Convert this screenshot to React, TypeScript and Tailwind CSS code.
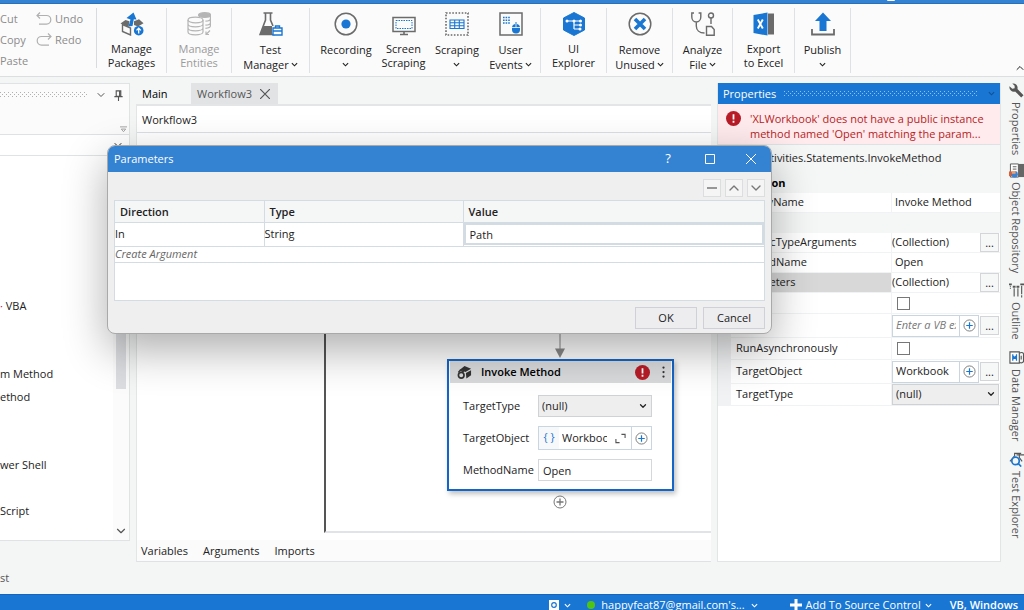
import React from "react";
import { ChevronDown, ChevronUp } from "lucide-react";

const GREY = "#6b6b6b";
const BLUE = "#1976d2";

function Down({ className = "" }: { className?: string }) {
  return (
    <svg viewBox="0 0 8 8" className={`inline-block size-[7px] shrink-0 ${className}`} fill="none" stroke="currentColor" strokeWidth="1.3">
      <path d="M1 2.5 4 5.5 7 2.5" />
    </svg>
  );
}

function PackagesIcon() {
  return (
    <svg viewBox="0 0 24 24" className="size-6" fill="none">
      <path d="M2.500 12.500v7l8 3.500v-7Z" stroke={GREY} strokeWidth="1.400" />
      <path d="M0.500 11.500 5.500 8l4 1.200L8.500 15Z" fill={GREY} />
      <path d="M14 9.200l5-2 4.500 4-5.500 3.300-4-1.500Z" fill={GREY} />
      <path d="M8.500 14.500 10.500 7.500 6.500 6 13.500 0.500 16.500 7.500 13.800 7.200 12.500 14Z" fill={BLUE} />
      <circle cx="18.700" cy="18.700" r="4.800" fill={BLUE} />
      <path d="M18.700 21.500v-5M16.500 18.400l2.200-2.200 2.200 2.200" stroke="#fff" strokeWidth="1.300" />
    </svg>
  );
}

function EntitiesIcon() {
  return (
    <svg viewBox="0 0 24 24" className="size-6" fill="none" stroke="#b5b5b5" strokeWidth="1.200">
      <ellipse cx="17.500" cy="3" rx="6" ry="2.300" fill="#b5b5b5" />
      <path d="M23.400 3v11c0 1.200-2 2-5 2.300M23.400 7c0 1-2 2-5 2.200M23.400 11c0 1-2 2-5 2.200" />
      <ellipse cx="8.500" cy="8" rx="7.500" ry="2.800" />
      <path d="M1 8v12c0 1.600 3.400 2.800 7.500 2.800S16 21.600 16 20V8M1 12c0 1.600 3.400 2.800 7.500 2.800S16 13.600 16 12M1 16c0 1.600 3.400 2.800 7.500 2.800S16 17.600 16 16" />
      <path d="M23 18.500 19 22.500M19 19.500v3h3" />
    </svg>
  );
}

function FlaskIcon() {
  return (
    <svg viewBox="0 0 24 24" className="size-6" fill="none">
      <path d="M4.500 1h9M6.500 1v7L1 22.500h15M11.500 1v7l2.500 6" stroke={GREY} strokeWidth="1.600" />
      <path d="M4.500 14h8.500v9H1Z" fill={GREY} />
      <path d="M14 16h9v7h-9ZM16.500 16v-2h4v2M14 19h9" stroke={BLUE} strokeWidth="1.400" fill="#fff" />
    </svg>
  );
}

function RecordingIcon() {
  return (
    <svg viewBox="0 0 24 24" className="size-6" fill="none">
      <circle cx="12" cy="12" r="10.800" stroke={GREY} strokeWidth="1.500" />
      <circle cx="12" cy="12" r="4.600" fill={BLUE} />
    </svg>
  );
}

function ScreenIcon() {
  return (
    <svg viewBox="0 0 24 24" className="size-6" fill="none">
      <rect x="1" y="5.500" width="22" height="14" stroke={GREY} strokeWidth="1.500" />
      <rect x="4" y="8.500" width="16" height="8" stroke={BLUE} strokeDasharray="1.500 1" />
      <path d="M12 19v3M8 22.500h8" stroke={GREY} strokeWidth="1.600" />
    </svg>
  );
}

function ScrapingIcon() {
  return (
    <svg viewBox="0 0 24 24" className="size-6" fill="none">
      <rect x="1" y="1" width="22" height="22" stroke={GREY} strokeWidth="1.600" strokeDasharray="1.600 1.540" />
      <path d="M5 8h14v8.500H5ZM5 10.800h14M5 13.700h14M9.700 8v8.500M14.300 8v8.500" stroke={BLUE} strokeWidth="1.100" />
    </svg>
  );
}

function EventsIcon() {
  return (
    <svg viewBox="0 0 24 24" className="size-6" fill="none">
      <rect x="1" y="1" width="22" height="22" stroke={GREY} strokeWidth="1.500" />
      <path d="M4 5.500h7M4 8.200h7M4 11h7" stroke={BLUE} strokeWidth="1.600" strokeDasharray="1.600 1" />
      <path d="M17 10v2" stroke={BLUE} />
      <rect x="13" y="12" width="8" height="9.500" rx="4" fill={BLUE} />
      <path d="M13 15.500h8M17 12v3.500" stroke="#fff" strokeWidth="0.800" />
    </svg>
  );
}

function ExplorerIcon() {
  return (
    <svg viewBox="0 0 24 24" className="size-6" fill="none">
      <path d="M12 0.500 22.500 6v12L12 23.500 1.500 18V6Z" fill={BLUE} stroke={BLUE} strokeLinejoin="round" />
      <path d="M5 9h14M12 9v8M12 13h7M12 17h6" stroke="#fff" strokeWidth="1.200" />
      <g fill="#fff">
        <circle cx="5" cy="9" r="1.500" />
        <circle cx="12" cy="9" r="1.500" />
        <circle cx="18.500" cy="9" r="1.500" />
        <circle cx="18.500" cy="13" r="1.500" />
        <circle cx="18" cy="17" r="1.500" />
      </g>
    </svg>
  );
}

function RemoveIcon() {
  return (
    <svg viewBox="0 0 24 24" className="size-6" fill="none">
      <circle cx="12" cy="12" r="10.800" stroke={GREY} strokeWidth="1.500" />
      <path d="M7 7l10 10M17 7 7 17" stroke={BLUE} strokeWidth="3.600" />
    </svg>
  );
}

function AnalyzeIcon() {
  return (
    <svg viewBox="0 0 24 24" className="size-6" fill="none" stroke={GREY} strokeWidth="1.400">
      <path d="M3 1H0.800v4c0 3 2 5 4.500 5s4.500-2 4.500-5V1H7.600M5.300 10v4c0 4 3 7 8.200 7" />
      <circle cx="20" cy="3.500" r="2.500" />
      <path d="M20 6v6M15.500 14.500h5l2.700 3v5.800h-7.700Z" />
    </svg>
  );
}

function ExcelIcon() {
  return (
    <svg viewBox="0 0 24 24" className="size-6" fill="none">
      <path d="M16 1.500h6v21h-6Z" fill={GREY} />
      <path d="M1.500 3 15.500 0.500v23L1.500 21Z" fill={BLUE} />
      <path d="M5.800 7.500l5 9M10.800 7.500l-5 9" stroke="#fff" strokeWidth="1.900" />
    </svg>
  );
}

function PublishIcon() {
  return (
    <svg viewBox="0 0 24 24" className="size-6" fill="none">
      <path d="M1 17v5.500h22V17" stroke={GREY} strokeWidth="1.800" />
      <path d="M12 0.500 20 9h-4.500v10h-7V9H4Z" fill={BLUE} />
    </svg>
  );
}

type RibbonItemProps = {
  icon: React.ReactNode;
  first: string;
  second?: string;
  menu?: boolean;
  disabled?: boolean;
  className: string;
};

function RibbonItem({ icon, first, second, menu, disabled, className }: RibbonItemProps) {
  return (
    <button
      disabled={disabled}
      className={`flex shrink-0 flex-col items-center gap-[6px] whitespace-nowrap pt-1 ${disabled ? "text-[#9a9a9a]" : "text-[#222]"} ${className}`}
    >
      {icon}
      <span className={`flex flex-col items-center ${menu ? "leading-[15px]" : "leading-[14px]"}`}>
        <span>{first}</span>
        <span className="flex min-h-[14px] items-center gap-[2px]">
          {second}
          {menu && <Down />}
        </span>
      </span>
    </button>
  );
}

function Ribbon() {
  return (
    <header className="flex h-[73px] shrink-0 items-start overflow-hidden border-b border-[#dcdfe0] bg-[#fbfbfb] pt-1">
      <div className="flex h-[60px] w-[97px] shrink-0 border-r border-[#d9dcde] text-[#8b8b8b]">
        <div className="flex w-9 flex-col items-start leading-[21px]">
          <button>Cut</button>
          <button>Copy</button>
          <button>Paste</button>
        </div>
        <div className="flex flex-col items-start leading-[21px]">
          <button className="flex items-center gap-[3px]">
            <svg viewBox="0 0 16 16" className="size-4" fill="none" stroke="#b0b0b0" strokeWidth="1.200">
              <path d="M4 1.500 1 4.500l3 3M1 4.500h9.500a4.300 4.300 0 0 1 0 8.600H3" />
            </svg>
            Undo
          </button>
          <button className="flex items-center gap-[3px]">
            <svg viewBox="0 0 16 16" className="size-4" fill="none" stroke="#b0b0b0" strokeWidth="1.200">
              <path d="M12 1.500l3 3-3 3M15 4.500H5.500a4.300 4.300 0 0 0 0 8.600H13" />
            </svg>
            Redo
          </button>
        </div>
      </div>
      <div className="flex h-[65px] shrink-0">
        <div className="flex border-r border-[#dfe2e4]">
          <RibbonItem icon={<PackagesIcon />} first="Manage" second="Packages" className="w-[69px]" />
        </div>
        <div className="flex border-r border-[#dfe2e4]">
          <RibbonItem icon={<EntitiesIcon />} first="Manage" second="Entities" disabled className="w-16" />
        </div>
        <div className="flex border-r border-[#dfe2e4]">
          <RibbonItem icon={<FlaskIcon />} first="Test" second="Manager" menu className="w-[77px]" />
        </div>
        <div className="flex border-r border-[#dfe2e4] px-1">
          <RibbonItem icon={<RecordingIcon />} first="Recording" menu className="w-16" />
          <RibbonItem icon={<ScreenIcon />} first="Screen" second="Scraping" className="w-[51px]" />
          <RibbonItem icon={<ScrapingIcon />} first="Scraping" menu className="w-14" />
          <RibbonItem icon={<EventsIcon />} first="User" second="Events" menu className="w-[51px]" />
        </div>
        <div className="flex border-r border-[#dfe2e4]">
          <RibbonItem icon={<ExplorerIcon />} first="UI" second="Explorer" className="w-[65px]" />
        </div>
        <div className="flex border-r border-[#dfe2e4]">
          <RibbonItem icon={<RemoveIcon />} first="Remove" second="Unused" menu className="w-[65px]" />
        </div>
        <div className="flex border-r border-[#dfe2e4]">
          <RibbonItem icon={<AnalyzeIcon />} first="Analyze" second="File" menu className="w-[59px]" />
        </div>
        <div className="flex border-r border-[#dfe2e4]">
          <RibbonItem icon={<ExcelIcon />} first="Export" second="to Excel" className="w-[61px]" />
        </div>
        <div className="flex border-r border-[#dfe2e4]">
          <RibbonItem icon={<PublishIcon />} first="Publish" menu className="w-[55px]" />
        </div>
      </div>
      <button aria-label="Collapse ribbon" className="ml-auto self-end pb-[2px]">
        <ChevronUp className="-mr-[2px] size-3" />
      </button>
    </header>
  );
}

function Dots({ color, className }: { color: string; className: string }) {
  return (
    <svg className={className} aria-hidden="true">
      <defs>
        <pattern id={`grip${color.slice(1)}`} width="4" height="4" patternUnits="userSpaceOnUse">
          <rect width="1" height="1" fill={color} />
          <rect x="2" y="2" width="1" height="1" fill={color} />
        </pattern>
      </defs>
      <rect width="100%" height="100%" fill={`url(#grip${color.slice(1)})`} />
    </svg>
  );
}

function ActivitiesPanel() {
  return (
    <aside className="mb-[53px] flex w-[130px] shrink-0 flex-col border border-l-0 border-[#e0e3e4] bg-white">
      <div className="flex h-[51px] shrink-0 flex-col justify-between border-b border-[#dfe2e4] bg-[#fbfbfb]">
        <div className="flex h-[22px] items-center">
          <Dots color="#b0b0b0" className="h-[6px] w-[88px]" />
          <ChevronDown className="ml-[7px] size-3 text-[#555]" />
          <svg viewBox="0 0 12 12" className="ml-[6px] size-[11px]" fill="none" stroke="#555" strokeWidth="1.200">
            <path d="M3.500 1h5v6h-5ZM7.200 1v6M1.500 7.200h9M6 7v5" />
          </svg>
        </div>
        <svg viewBox="0 0 8 8" className="mr-[2px] mb-px size-[7px] self-end" fill="none" stroke="#999">
          <path d="M0 1h8M1.500 3.500h5L4 6.500Z" />
        </svg>
      </div>
      <div className="flex h-[21px] shrink-0 items-start justify-end border-b border-[#e0e3e4] pt-1 pr-[5px]">
        <ChevronDown className="size-3" />
      </div>
      <div className="flex flex-1">
        <ul className="flex-1 overflow-hidden whitespace-nowrap pt-[138px] leading-[23px] text-[#222]">
          <li><span className="text-[#c2185b]">·</span> VBA</li>
          <li className="mt-[45px]">m Method</li>
          <li>ethod</li>
          <li className="mt-[45px]">wer Shell</li>
          <li className="mt-[23px]">Script</li>
        </ul>
        <div className="flex w-4 flex-col items-center justify-between bg-[#fbfbfb]">
          <div className="h-[233px] w-[10px] bg-[#dcdde0]" />
          <ChevronDown className="mb-[2px] size-[14px] text-[#555]" />
        </div>
      </div>
    </aside>
  );
}

function PlusCircle({ className, ring = "#777", plus = BLUE }: { className: string; ring?: string; plus?: string }) {
  return (
    <svg viewBox="0 0 14 14" className={className} fill="none">
      <circle cx="7" cy="7" r="6" stroke={ring} />
      <path d="M7 3.500v7M3.500 7h7" stroke={plus} strokeWidth="1.300" />
    </svg>
  );
}

function ErrorIcon({ className }: { className: string }) {
  return (
    <svg viewBox="0 0 16 16" className={className}>
      <circle cx="8" cy="8" r="8" fill="#b71c27" />
      <path d="M8 3.500v5.500M8 10.500v2" stroke="#fff" strokeWidth="1.900" />
    </svg>
  );
}

function InvokeNode() {
  return (
    <section className="absolute top-[226px] left-[310px] h-[132px] w-[227px] border-2 border-[#1565c8] bg-white text-[#222] shadow-[2px_3px_5px_rgba(0,0,0,0.25)]">
      <div className="mx-px flex h-[22px] items-center bg-[#d9dadc] pl-[7px] font-semibold text-black">
        <svg viewBox="0 0 16 16" className="mr-[9px] size-[15px]" fill="none">
          <path d="M8 1 15 4 9 7.500 3 5ZM9.500 8.500 15 5.500v5.500l-5 3.500Z" fill="#333" />
          <circle cx="4.500" cy="11" r="3" stroke="#333" strokeWidth="1.800" />
          <path d="M1.500 8 3.500 5.500l4 2" stroke="#333" strokeWidth="1.500" />
        </svg>
        <h2>Invoke Method</h2>
        <ErrorIcon className="ml-auto size-[15px]" />
        <button aria-label="More options" className="ml-3 mr-[6px]">
          <svg viewBox="0 0 4 16" className="h-4 w-[3px]" fill="#333">
            <circle cx="2" cy="2" r="1.500" />
            <circle cx="2" cy="8" r="1.500" />
            <circle cx="2" cy="14" r="1.500" />
          </svg>
        </button>
      </div>
      <div className="grid grid-cols-[75px_114px] items-center gap-y-[9px] pt-3 pl-[14px]">
        <label htmlFor="nodeType">TargetType</label>
        <div className="relative">
          <select id="nodeType" className="h-[22px] w-full appearance-none border border-[#d0d3d6] bg-[#eeeeef] pl-[3px] align-top">
            <option>(null)</option>
          </select>
          <ChevronDown className="pointer-events-none absolute top-[6px] right-1 size-[10px]" strokeWidth={3} />
        </div>
        <label htmlFor="nodeObject">TargetObject</label>
        <div className="flex h-6 items-center border border-[#c9d5e0]">
          <span className="h-full w-5 bg-[#f7f8f9] text-center leading-[20px] text-[#1976d2]">{"{ }"}</span>
          <input id="nodeObject" defaultValue="Workbook" className="ml-[3px] w-[45px]" />
          <button aria-label="Expand" className="ml-2">
            <svg viewBox="0 0 12 12" className="size-[11px]" fill="none" stroke="#555" strokeWidth="1.200">
              <path d="M7 1.500h4v4M1 6.500v4h4" />
            </svg>
          </button>
          <button aria-label="Add" className="ml-auto flex h-full w-5 items-center justify-center border-l border-[#c9d5e0]">
            <PlusCircle className="size-[13px]" />
          </button>
        </div>
        <label htmlFor="nodeMethod">MethodName</label>
        <input id="nodeMethod" defaultValue="Open" className="h-[22px] w-full border border-[#d5d8db] px-1" />
      </div>
    </section>
  );
}

function Designer() {
  return (
    <main className="mb-8 flex min-w-0 flex-1 flex-col">
      <nav className="flex h-[21px] shrink-0">
        <button className="w-[55px] pt-[2px] pl-[6px] text-left text-black">Main</button>
        <div className="flex items-center bg-[#e1e3e5] pt-[2px] pl-[6px] text-[#555]">
          <button>Workflow3</button>
          <button aria-label="Close Workflow3" className="mx-2 pb-px">
            <svg viewBox="0 0 10 10" className="size-[10px]" stroke="#555" strokeWidth="1.200">
              <path d="M0 0l10 10M10 0 0 10" />
            </svg>
          </button>
        </div>
      </nav>
      <div className="flex min-h-0 flex-1 flex-col border-t-2 border-b border-l border-t-[#e3e5e7] border-b-[#dfe2e4] border-l-[#e3e5e7] bg-white">
        <div className="h-[27px] shrink-0 border-b border-[#dae0e5] pl-[5px] leading-[28px]">Workflow3</div>
        <div className="relative flex-1 overflow-hidden">
          <div className="absolute top-5 right-0 bottom-[7px] left-[187px] border-b-2 border-l-2 border-b-[#e0e4e9] border-l-[#555]" />
          <svg viewBox="0 0 10 30" className="absolute top-[195px] left-[418px] h-[30px] w-[10px]">
            <path d="M5 0v24" stroke="#888" />
            <path d="M0 20.500h10L5 30Z" fill="#888" />
          </svg>
          <InvokeNode />
          <button aria-label="Add activity" className="absolute top-[362px] left-[416px]">
            <PlusCircle className="size-[14px]" plus="#777" />
          </button>
        </div>
        <div className="flex h-[21px] shrink-0 items-center gap-[15px] bg-[#fbfbfb] pt-[2px] pl-1">
          <button>Variables</button>
          <button>Arguments</button>
          <button>Imports</button>
        </div>
      </div>
    </main>
  );
}

function PropRow({ id, label, height, selected, children }: { id?: string; label: string; height: string; selected?: boolean; children?: React.ReactNode }) {
  return (
    <div className={`grid grid-cols-[13px_1fr_108px] border-b border-[#f1f2f3] ${height}`}>
      <span className="bg-[#f1f2f3]" />
      <label htmlFor={id} className={`flex items-center border-r border-[#f1f2f3] pl-[5px] ${selected ? "bg-[#d8d8d8]" : ""}`}>
        {label}
      </label>
      <div className="flex items-center pr-[1px]">{children}</div>
    </div>
  );
}

function More({ label }: { label: string }) {
  return (
    <button aria-label={label} className="ml-auto h-[19px] w-[19px] shrink-0 border border-[#d3d5d8] bg-[#f6f7f7] leading-[16px]">
      ...
    </button>
  );
}

function Expression({ id, value, placeholder }: { id: string; value?: string; placeholder?: string }) {
  return (
    <>
      <div className="flex h-[22px] w-[87px] border border-[#c9d5e0]">
        <input id={id} defaultValue={value} placeholder={placeholder} className="my-px ml-[3px] w-[60px] min-w-0 placeholder:text-[#777] placeholder:italic" />
        <button aria-label={`Add to ${id}`} className="ml-auto flex w-[19px] shrink-0 items-center justify-center border-l border-[#c9d5e0]">
          <PlusCircle className="size-[13px]" />
        </button>
      </div>
      <More label={`Edit ${id}`} />
    </>
  );
}

function PropertiesPanel() {
  return (
    <aside className="mr-[7px] mb-8 flex w-[284px] shrink-0 flex-col border border-t-0 border-[#e2e5e6] bg-white">
      <div className="flex h-[21px] shrink-0 items-center bg-[#1976d2] pl-[5px] text-white">
        <h2 className="pt-px">Properties</h2>
        <Dots color="#8cc0f0" className="ml-2 h-[6px] w-[194px] shrink-0" />
        <Down className="ml-[10px] text-[#0f5298]" />
      </div>
      <div className="flex h-[41px] shrink-0 border-b border-[#dfe2e4] bg-[#ffebee] pt-[7px] pl-[8px] leading-[15px] text-[#b71c1c]">
        <ErrorIcon className="size-[15px]" />
        <p className="ml-[9px] whitespace-nowrap">
          'XLWorkbook' does not have a public instance
          <br />
          method named 'Open' matching the param...
        </p>
      </div>
      <div className="h-7 shrink-0 bg-[#f5f6f6] leading-[26px]">System.Activities.Statements.InvokeMethod</div>
      <div className="h-5 shrink-0 bg-[#f5f6f6] pl-[18px] leading-5 font-bold text-black">Common</div>
      <PropRow id="DisplayName" label="DisplayName" height="h-5">
        <input id="DisplayName" defaultValue="Invoke Method" className="w-full pl-[3px]" />
      </PropRow>
      <div className="h-5 shrink-0 bg-[#f5f6f6] pl-[18px] leading-5 font-bold text-black">Misc</div>
      <PropRow label="GenericTypeArguments" height="h-5">
        (Collection)
        <More label="Edit type arguments" />
      </PropRow>
      <PropRow id="MethodName" label="MethodName" height="h-5">
        <input id="MethodName" defaultValue="Open" className="w-full pl-[3px]" />
      </PropRow>
      <PropRow label="Parameters" height="h-5" selected>
        (Collection)
        <More label="Edit parameters" />
      </PropRow>
      <PropRow id="Private" label="Private" height="h-[21px]">
        <input id="Private" type="checkbox" className="ml-[5px] size-[13px] appearance-none border border-[#777] bg-white" />
      </PropRow>
      <PropRow id="Result" label="Result" height="h-6">
        <Expression id="Result" placeholder="Enter a VB expression" />
      </PropRow>
      <PropRow id="RunAsynchronously" label="RunAsynchronously" height="h-[22px]">
        <input id="RunAsynchronously" type="checkbox" className="ml-[5px] size-[13px] appearance-none border border-[#777] bg-white" />
      </PropRow>
      <PropRow id="TargetObject" label="TargetObject" height="h-6">
        <Expression id="TargetObject" value="Workbook" />
      </PropRow>
      <PropRow id="TargetType" label="TargetType" height="h-[22px]">
        <div className="relative flex-1">
          <select id="TargetType" className="h-[21px] w-full appearance-none border border-[#cfd2d5] bg-[#eeeeef] pl-[3px] align-top">
            <option>(null)</option>
          </select>
          <ChevronDown className="pointer-events-none absolute top-[5px] right-[3px] size-[10px]" strokeWidth={3} />
        </div>
      </PropRow>
    </aside>
  );
}

function SideTab({ icon, label, className }: { icon: React.ReactNode; label: string; className: string }) {
  return (
    <button className={`flex shrink-0 flex-col items-center gap-1 text-[#555] ${className}`}>
      {icon}
      <span className="whitespace-nowrap leading-[14px] [writing-mode:vertical-rl]">{label}</span>
    </button>
  );
}

function SideTabs() {
  return (
    <nav className="flex w-4 shrink-0 flex-col items-center">
      <SideTab
        label="Properties"
        className="h-20"
        icon={
          <svg viewBox="0 0 16 16" className="size-[15px]">
            <path d="M3.500 0.500a4.800 4.800 0 0 1 5.500 6L15.500 13l-2.500 2.500L6.500 9A4.800 4.800 0 0 1 0.500 3.500L3.500 6l2.500-0.500V3Z" fill="#555" />
          </svg>
        }
      />
      <SideTab
        label="Object Repository"
        className="h-[120px]"
        icon={
          <svg viewBox="0 0 16 16" className="size-[15px]" fill="none">
            <path d="M1.500 1H10v14H1.500Z" stroke="#555" fill="#fff" />
            <path d="M10 1h6v14h-6Z" fill="#666" />
            <path d="M4 4h4M4 6.500h4" stroke="#555" />
            <path d="M0 9h4v5H0Z" fill="#e25c2c" />
            <circle cx="6" cy="12" r="3.500" fill="#3b82d0" />
            <path d="M3 8.500h4v3H3Z" fill="#f0a070" />
          </svg>
        }
      />
      <SideTab
        label="Outline"
        className="h-[67px]"
        icon={
          <svg viewBox="0 0 16 16" className="size-[15px]" fill="none" stroke="#555" strokeWidth="1.200">
            <path d="M5.500 5.500v10M9.500 5.500v10M13.500 3v12.500" strokeDasharray="9 1" />
            <path d="M0 1.500h3M12 1.500h4M4 4h3M8 4h3" strokeWidth="2" />
            <path d="M1.500 3v3" strokeDasharray="1 1" />
          </svg>
        }
      />
      <SideTab
        label="Data Manager"
        className="h-[102px]"
        icon={
          <svg viewBox="0 0 16 16" className="size-[15px]" fill="none">
            <path d="M1 2h10v12H1Z" stroke="#555" fill="#fff" strokeWidth="1.200" />
            <path d="M4 4.500v7M8 4.500v7M4 6l4 4M8 6l-4 4" stroke={BLUE} strokeWidth="1.300" />
            <path d="M11 3.500c3-2 5 0 4.500 2v5c.5 3-2 4-4.500 2.500M13 6v4" stroke="#555" strokeWidth="1.200" />
          </svg>
        }
      />
      <SideTab
        label="Test Explorer"
        className=""
        icon={
          <svg viewBox="0 0 16 16" className="size-[15px]" fill="none">
            <path d="M1 10 6 4V1.500h7M8 3h8M11 1v5l3 4" stroke="#555" strokeWidth="1.200" />
            <circle cx="7" cy="9.500" r="4" stroke={BLUE} strokeWidth="1.800" fill="#f4f6f6" />
            <path d="M10 12.500 13 15.500" stroke={BLUE} strokeWidth="1.800" />
          </svg>
        }
      />
    </nav>
  );
}

function ParametersDialog() {
  return (
    <div
      role="dialog"
      aria-label="Parameters"
      className="absolute top-[145px] left-[107px] w-[665px] overflow-hidden rounded-lg border border-[#a9a9a9] bg-[#efefef] text-[#222] shadow-[0_16px_44px_rgba(0,0,0,0.32)]"
    >
      <div className="flex h-[26px] items-center bg-[#3482d2] pl-[6px] text-white">
        <h1>Parameters</h1>
        <button aria-label="Help" className="ml-auto w-[42px] text-[13px]">?</button>
        <button aria-label="Maximize" className="flex w-[42px] justify-center">
          <svg viewBox="0 0 10 10" className="size-[10px]" fill="none" stroke="#fff"><path d="M.5.5h9v9h-9Z" /></svg>
        </button>
        <button aria-label="Close" className="flex w-10 justify-center">
          <svg viewBox="0 0 10 10" className="size-[10px]" fill="none" stroke="#fff"><path d="M0 0l10 10M10 0 0 10" /></svg>
        </button>
      </div>
      <div className="px-[6px] pt-[7px] pb-1">
        <div className="flex justify-end gap-1">
          <button aria-label="Remove" className="flex size-[18px] items-center justify-center border border-[#dcdddf] bg-[#f5f5f5]">
            <svg viewBox="0 0 10 10" className="size-[10px]" stroke="#777" strokeWidth="1.300"><path d="M0 5h10" /></svg>
          </button>
          <button aria-label="Move up" className="flex size-[18px] items-center justify-center border border-[#dcdddf] bg-[#f5f5f5]">
            <ChevronUp className="size-4 shrink-0 text-[#777]" />
          </button>
          <button aria-label="Move down" className="flex size-[18px] items-center justify-center border border-[#dcdddf] bg-[#f5f5f5]">
            <ChevronDown className="size-4 shrink-0 text-[#777]" />
          </button>
        </div>
        <div className="mt-[3px] h-[101px] border border-[#d3dce3] bg-white">
          <table className="w-full table-fixed border-collapse text-left">
            <colgroup>
              <col className="w-[149px]" />
              <col className="w-[199px]" />
              <col />
            </colgroup>
            <thead>
              <tr className="h-[21px] bg-[#f5f6f6]">
                <th className="border-r border-b border-[#d3dce3] px-[5px] pt-px font-semibold">Direction</th>
                <th className="border-r border-b border-[#d3dce3] px-[5px] pt-px font-semibold">Type</th>
                <th className="border-b border-[#d3dce3] px-[5px] pt-px font-semibold">Value</th>
              </tr>
            </thead>
            <tbody>
              <tr className="h-6">
                <td className="border-r border-b border-[#d3dce3]">In</td>
                <td className="border-r border-b border-[#d3dce3]">String</td>
                <td className="border-b border-[#d3dce3] p-0">
                  <input aria-label="Value" defaultValue="Path" className="block h-[22px] w-full border-2 border-[#d3dce3] bg-white px-1" />
                </td>
              </tr>
              <tr className="h-4">
                <td colSpan={3} className="border-b border-[#d3dce3] p-0 leading-[14px] text-[#666] italic">Create Argument</td>
              </tr>
            </tbody>
          </table>
        </div>
        <div className="mt-[6px] flex justify-end gap-[6px]">
          <button className="h-[22px] w-[62px] border border-[#cfd0d8] bg-[#ededf0]">OK</button>
          <button className="h-[22px] w-[62px] border border-[#cfd0d8] bg-[#ededf0]">Cancel</button>
        </div>
      </div>
    </div>
  );
}

function StatusBar() {
  return (
    <footer className="flex h-4 shrink-0 items-start justify-end overflow-hidden whitespace-nowrap border-t border-[#1565c0] bg-[#1976d2] pt-[2px] pr-[6px] leading-4 text-white">
      <button aria-label="Orchestrator" className="flex h-4 items-center gap-[5px]">
        <svg viewBox="0 0 10 10" className="size-[10px]" fill="none">
          <rect width="10" height="10" fill="#fff" />
          <circle cx="5" cy="5" r="2.300" stroke={BLUE} strokeWidth="1.200" />
        </svg>
        <Down />
      </button>
      <button className="ml-4 flex items-center gap-[6px]">
        <span className="size-2 rounded-full bg-[#4fc414]" />
        happyfeat87@gmail.com's...
        <Down />
      </button>
      <button className="ml-8 flex items-center gap-1">
        <svg viewBox="0 0 12 12" className="size-3" stroke="#fff" strokeWidth="3"><path d="M6 0v12M0 6h12" /></svg>
        Add To Source Control
        <Down />
      </button>
      <span className="ml-[18px] font-semibold">VB, Windows</span>
    </footer>
  );
}

export default function App() {
  return (
    <div className="relative flex h-screen flex-col overflow-hidden bg-[#f4f6f6] font-['Open_Sans',sans-serif] text-[11px] text-[#222]">
      <div className="h-1 shrink-0 border-b border-[#2a6fb8] bg-[#3482d2]">
        <div className="ml-[887px] h-px w-2 rounded-b-full bg-white" />
      </div>
      <Ribbon />
      <div className="relative flex min-h-0 flex-1 gap-[6px] pt-[6px]">
        <ActivitiesPanel />
        <Designer />
        <div className="flex shrink-0">
          <PropertiesPanel />
          <SideTabs />
        </div>
        <span className="absolute bottom-2 left-0 text-[#555]">st</span>
      </div>
      <StatusBar />
      <ParametersDialog />
    </div>
  );
}
